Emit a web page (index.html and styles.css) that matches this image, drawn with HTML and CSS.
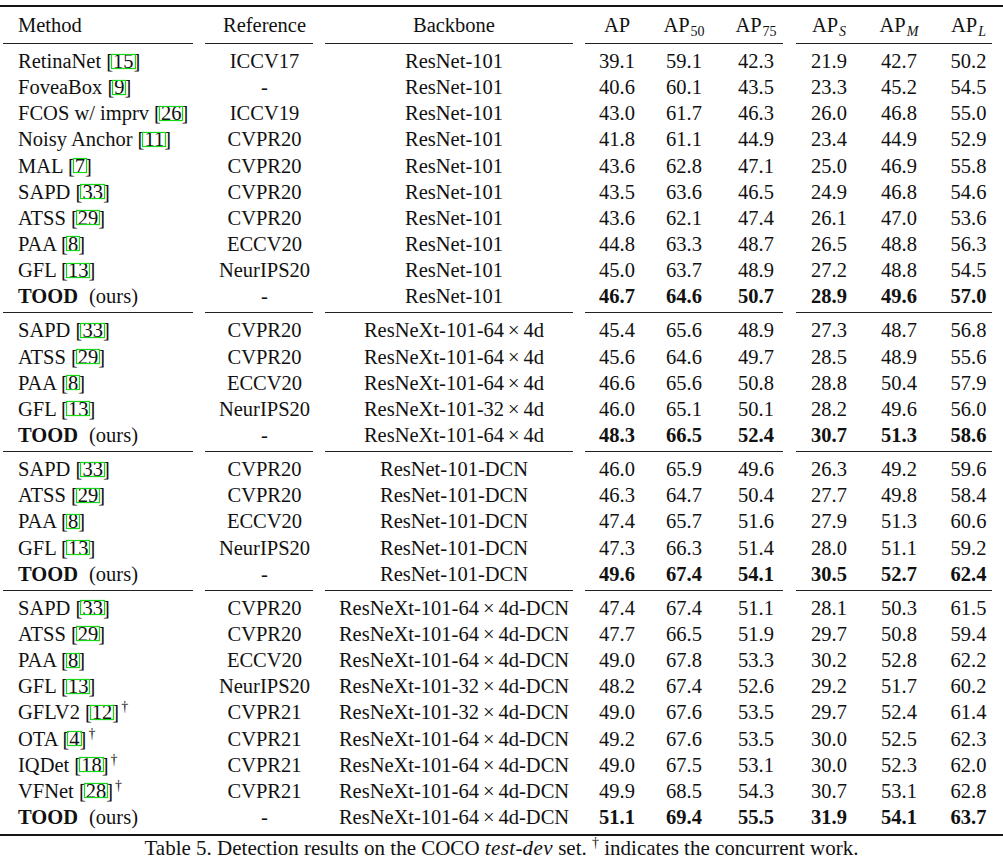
FILE: index.html
```html
<!DOCTYPE html>
<html lang="en">
<head>
<meta charset="utf-8">
<title>Table 5</title>
<link rel="stylesheet" href="styles.css">
</head>
<body>
<div class="table">
  <div class="toprule"></div>
  <div class="row head">
    <span class="m">Method</span><span>Reference</span><span>Backbone</span>
    <span>AP</span><span>AP<sub>50</sub></span><span>AP<sub>75</sub></span>
    <span>AP<sub><i>S</i></sub></span><span>AP<sub><i>M</i></sub></span><span>AP<sub><i>L</i></sub></span>
  </div>
  <div class="rules first"><span class="r1"></span><span class="r2"></span><span class="r3"></span><span class="r4"></span><span class="r5"></span></div>

  <div class="row"><span class="m">RetinaNet [<span class="cite">15</span>]</span><span>ICCV17</span><span>ResNet-101</span><span>39.1</span><span>59.1</span><span>42.3</span><span>21.9</span><span>42.7</span><span>50.2</span></div>
  <div class="row"><span class="m">FoveaBox [<span class="cite">9</span>]</span><span>-</span><span>ResNet-101</span><span>40.6</span><span>60.1</span><span>43.5</span><span>23.3</span><span>45.2</span><span>54.5</span></div>
  <div class="row"><span class="m">FCOS w/ imprv [<span class="cite">26</span>]</span><span>ICCV19</span><span>ResNet-101</span><span>43.0</span><span>61.7</span><span>46.3</span><span>26.0</span><span>46.8</span><span>55.0</span></div>
  <div class="row"><span class="m">Noisy Anchor [<span class="cite">11</span>]</span><span>CVPR20</span><span>ResNet-101</span><span>41.8</span><span>61.1</span><span>44.9</span><span>23.4</span><span>44.9</span><span>52.9</span></div>
  <div class="row"><span class="m">MAL [<span class="cite">7</span>]</span><span>CVPR20</span><span>ResNet-101</span><span>43.6</span><span>62.8</span><span>47.1</span><span>25.0</span><span>46.9</span><span>55.8</span></div>
  <div class="row"><span class="m">SAPD [<span class="cite">33</span>]</span><span>CVPR20</span><span>ResNet-101</span><span>43.5</span><span>63.6</span><span>46.5</span><span>24.9</span><span>46.8</span><span>54.6</span></div>
  <div class="row"><span class="m">ATSS [<span class="cite">29</span>]</span><span>CVPR20</span><span>ResNet-101</span><span>43.6</span><span>62.1</span><span>47.4</span><span>26.1</span><span>47.0</span><span>53.6</span></div>
  <div class="row"><span class="m">PAA [<span class="cite">8</span>]</span><span>ECCV20</span><span>ResNet-101</span><span>44.8</span><span>63.3</span><span>48.7</span><span>26.5</span><span>48.8</span><span>56.3</span></div>
  <div class="row"><span class="m">GFL [<span class="cite">13</span>]</span><span>NeurIPS20</span><span>ResNet-101</span><span>45.0</span><span>63.7</span><span>48.9</span><span>27.2</span><span>48.8</span><span>54.5</span></div>
  <div class="row ours"><span class="m"><b>TOOD</b><span class="o">(ours)</span></span><span>-</span><span class="nb">ResNet-101</span><span>46.7</span><span>64.6</span><span>50.7</span><span>28.9</span><span>49.6</span><span>57.0</span></div>

  <div class="rules"><span class="r1"></span><span class="r2"></span><span class="r3"></span><span class="r4"></span><span class="r5"></span></div>

  <div class="row"><span class="m">SAPD [<span class="cite">33</span>]</span><span>CVPR20</span><span>ResNeXt-101-64<span class="x">×</span>4d</span><span>45.4</span><span>65.6</span><span>48.9</span><span>27.3</span><span>48.7</span><span>56.8</span></div>
  <div class="row"><span class="m">ATSS [<span class="cite">29</span>]</span><span>CVPR20</span><span>ResNeXt-101-64<span class="x">×</span>4d</span><span>45.6</span><span>64.6</span><span>49.7</span><span>28.5</span><span>48.9</span><span>55.6</span></div>
  <div class="row"><span class="m">PAA [<span class="cite">8</span>]</span><span>ECCV20</span><span>ResNeXt-101-64<span class="x">×</span>4d</span><span>46.6</span><span>65.6</span><span>50.8</span><span>28.8</span><span>50.4</span><span>57.9</span></div>
  <div class="row"><span class="m">GFL [<span class="cite">13</span>]</span><span>NeurIPS20</span><span>ResNeXt-101-32<span class="x">×</span>4d</span><span>46.0</span><span>65.1</span><span>50.1</span><span>28.2</span><span>49.6</span><span>56.0</span></div>
  <div class="row ours"><span class="m"><b>TOOD</b><span class="o">(ours)</span></span><span>-</span><span class="nb">ResNeXt-101-64<span class="x">×</span>4d</span><span>48.3</span><span>66.5</span><span>52.4</span><span>30.7</span><span>51.3</span><span>58.6</span></div>

  <div class="rules"><span class="r1"></span><span class="r2"></span><span class="r3"></span><span class="r4"></span><span class="r5"></span></div>

  <div class="row"><span class="m">SAPD [<span class="cite">33</span>]</span><span>CVPR20</span><span>ResNet-101-DCN</span><span>46.0</span><span>65.9</span><span>49.6</span><span>26.3</span><span>49.2</span><span>59.6</span></div>
  <div class="row"><span class="m">ATSS [<span class="cite">29</span>]</span><span>CVPR20</span><span>ResNet-101-DCN</span><span>46.3</span><span>64.7</span><span>50.4</span><span>27.7</span><span>49.8</span><span>58.4</span></div>
  <div class="row"><span class="m">PAA [<span class="cite">8</span>]</span><span>ECCV20</span><span>ResNet-101-DCN</span><span>47.4</span><span>65.7</span><span>51.6</span><span>27.9</span><span>51.3</span><span>60.6</span></div>
  <div class="row"><span class="m">GFL [<span class="cite">13</span>]</span><span>NeurIPS20</span><span>ResNet-101-DCN</span><span>47.3</span><span>66.3</span><span>51.4</span><span>28.0</span><span>51.1</span><span>59.2</span></div>
  <div class="row ours"><span class="m"><b>TOOD</b><span class="o">(ours)</span></span><span>-</span><span class="nb">ResNet-101-DCN</span><span>49.6</span><span>67.4</span><span>54.1</span><span>30.5</span><span>52.7</span><span>62.4</span></div>

  <div class="rules"><span class="r1"></span><span class="r2"></span><span class="r3"></span><span class="r4"></span><span class="r5"></span></div>

  <div class="row"><span class="m">SAPD [<span class="cite">33</span>]</span><span>CVPR20</span><span>ResNeXt-101-64<span class="x">×</span>4d-DCN</span><span>47.4</span><span>67.4</span><span>51.1</span><span>28.1</span><span>50.3</span><span>61.5</span></div>
  <div class="row"><span class="m">ATSS [<span class="cite">29</span>]</span><span>CVPR20</span><span>ResNeXt-101-64<span class="x">×</span>4d-DCN</span><span>47.7</span><span>66.5</span><span>51.9</span><span>29.7</span><span>50.8</span><span>59.4</span></div>
  <div class="row"><span class="m">PAA [<span class="cite">8</span>]</span><span>ECCV20</span><span>ResNeXt-101-64<span class="x">×</span>4d-DCN</span><span>49.0</span><span>67.8</span><span>53.3</span><span>30.2</span><span>52.8</span><span>62.2</span></div>
  <div class="row"><span class="m">GFL [<span class="cite">13</span>]</span><span>NeurIPS20</span><span>ResNeXt-101-32<span class="x">×</span>4d-DCN</span><span>48.2</span><span>67.4</span><span>52.6</span><span>29.2</span><span>51.7</span><span>60.2</span></div>
  <div class="row"><span class="m">GFLV2 [<span class="cite">12</span>]<sup class="dg">†</sup></span><span>CVPR21</span><span>ResNeXt-101-32<span class="x">×</span>4d-DCN</span><span>49.0</span><span>67.6</span><span>53.5</span><span>29.7</span><span>52.4</span><span>61.4</span></div>
  <div class="row"><span class="m">OTA [<span class="cite">4</span>]<sup class="dg">†</sup></span><span>CVPR21</span><span>ResNeXt-101-64<span class="x">×</span>4d-DCN</span><span>49.2</span><span>67.6</span><span>53.5</span><span>30.0</span><span>52.5</span><span>62.3</span></div>
  <div class="row"><span class="m">IQDet [<span class="cite">18</span>]<sup class="dg">†</sup></span><span>CVPR21</span><span>ResNeXt-101-64<span class="x">×</span>4d-DCN</span><span>49.0</span><span>67.5</span><span>53.1</span><span>30.0</span><span>52.3</span><span>62.0</span></div>
  <div class="row"><span class="m">VFNet [<span class="cite">28</span>]<sup class="dg">†</sup></span><span>CVPR21</span><span>ResNeXt-101-64<span class="x">×</span>4d-DCN</span><span>49.9</span><span>68.5</span><span>54.3</span><span>30.7</span><span>53.1</span><span>62.8</span></div>
  <div class="row ours"><span class="m"><b>TOOD</b><span class="o">(ours)</span></span><span>-</span><span class="nb">ResNeXt-101-64<span class="x">×</span>4d-DCN</span><span>51.1</span><span>69.4</span><span>55.5</span><span>31.9</span><span>54.1</span><span>63.7</span></div>

  <div class="bottomrule"></div>
  <p class="caption">Table 5. Detection results on the COCO <i class="tt">test</i>-<i class="tt">dev</i> set. <sup class="dg">†</sup> indicates the concurrent work.</p>
</div>
</body>
</html>
```

FILE: styles.css
```css
html, body {
  margin: 0;
  padding: 0;
  background: #ffffff;
}

body {
  color: #111111;
  font-family: "Liberation Serif", "Times New Roman", serif;
  font-size: 20.5px;
}

.table {
  width: 1003px;
}

.toprule {
  margin-top: 5px;
  height: 2px;
  background: #151515;
}

.bottomrule {
  margin-top: 4px;
  height: 2px;
  background: #151515;
}

.row,
.rules {
  display: grid;
  grid-template-columns: 205px 119px 260px 66px 68px 76px 70px 70px 69px;
}

.row {
  height: 26.15px;
  line-height: 26.15px;
  white-space: nowrap;
}

.row.head {
  height: 36px;
  line-height: 36px;
}

.row > span {
  text-align: center;
}

.row > .m {
  text-align: left;
  padding-left: 18px;
}

.row sub {
  font-size: 14px;
  line-height: 0;
  vertical-align: -4px;
  margin-left: 1px;
}

.row sub i {
  font-style: italic;
}

.ours > span {
  font-weight: bold;
}

.ours > .m,
.ours > .nb,
.ours > span:nth-child(2) {
  font-weight: normal;
}

.ours b {
  font-weight: bold;
}

.ours .o {
  margin-left: 11px;
}

.x {
  margin: 0 4px;
}

.cite {
  position: relative;
}

.cite::after {
  content: "";
  position: absolute;
  left: -2px;
  right: -2px;
  top: 3.5px;
  bottom: 3.5px;
  border: 1px solid #14d814;
  box-shadow: 0 0 1px rgba(20, 210, 20, 0.7), inset 0 0 1px rgba(20, 210, 20, 0.7);
}

.dg {
  color: #111111;
  font-size: 14px;
  line-height: 0;
  vertical-align: 8px;
  margin-left: 2px;
}

.rules {
  height: 1px;
  margin: 3px 0 4px;
}

.rules.first {
  margin-top: 0;
}

.rules > span {
  background: #222222;
}

.rules .r1 {
  grid-column: 1;
  margin: 0 12px 0 3px;
}

.rules .r2 {
  grid-column: 2;
  margin: 0 11px 0 0;
}

.rules .r3 {
  grid-column: 3;
  margin: 0 11px 0 1px;
}

.rules .r4 {
  grid-column: 4 / 7;
  margin: 0 11px 0 1px;
}

.rules .r5 {
  grid-column: 7 / 10;
  margin: 0 11px 0 2px;
}

.caption {
  margin: 2px 0 0;
  text-align: center;
  line-height: 21px;
  font-size: 21px;
  white-space: nowrap;
}

.caption .tt {
  font-style: italic;
  letter-spacing: 0.4px;
}

.caption .dg {
  margin-left: 0;
}
```
